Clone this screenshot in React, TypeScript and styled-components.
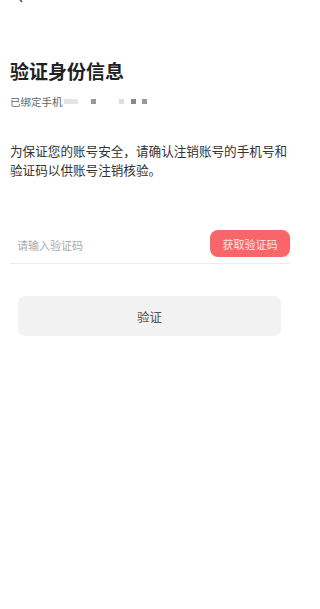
import React from "react";
import styled, { createGlobalStyle } from "styled-components";

const Global = createGlobalStyle`
  html, body { margin: 0; padding: 0; background: #fff; }
  body { font-family: "Noto Sans CJK SC", "Noto Sans", sans-serif; }
`;

const Page = styled.div`
  width: 294px;
  min-height: 609px;
  background: #fff;
  display: flex;
  flex-direction: column;
  overflow: hidden;
`;

const Header = styled.div`
  height: 4px;
  padding-left: 15px;
  display: flex;
  align-items: flex-end;
  overflow: hidden;
`;

const BackIcon = styled.svg`
  width: 10px;
  height: 14px;
  flex: none;
  margin-bottom: 1px;
`;

const Content = styled.div`
  padding: 54px 4px 0 10px;
  display: flex;
  flex-direction: column;
`;

const Title = styled.h1`
  margin: 0;
  font-size: 19px;
  line-height: 26px;
  font-weight: 700;
  color: #222;
`;

const PhoneRow = styled.div`
  margin-top: 9px;
  display: flex;
  align-items: center;
  height: 16px;
  font-size: 10.5px;
  color: #666;
`;

const Mask = styled.span<{ $w: number; $shade: string; $gap: number }>`
  display: inline-block;
  width: ${(p) => p.$w}px;
  height: 5px;
  margin-left: ${(p) => p.$gap}px;
  background: ${(p) => p.$shade};
`;

const Notice = styled.p`
  margin: 32px 0 0 0;
  font-size: 12.6px;
  line-height: 19px;
  color: #333;
`;

const InputRow = styled.div`
  margin-top: 48px;
  height: 36px;
  display: flex;
  align-items: center;
  justify-content: space-between;
  border-bottom: 1px solid #ececec;
  padding-left: 7px;
`;

const Input = styled.input`
  border: none;
  outline: none;
  background: transparent;
  font-family: inherit;
  font-size: 11px;
  color: #333;
  width: 150px;
  padding: 0;
  &::placeholder { color: #aaa; }
`;

const CodeButton = styled.button`
  height: 27px;
  width: 80px;
  border: none;
  border-radius: 8px;
  background: #f8666b;
  color: #fde8e8;
  font-family: inherit;
  font-size: 11px;
  padding: 0;
  margin-bottom: 3px;
`;

const VerifyButton = styled.button`
  margin: 32px 9px 0 8px;
  height: 40px;
  border: none;
  border-radius: 7px;
  background: #f2f2f2;
  color: #555;
  font-family: inherit;
  font-size: 12.5px;
  padding: 0;
`;

export default function App() {
  return (
    <>
      <Global />
      <Page>
        <Header>
          <BackIcon viewBox="0 0 10 14">
            <path d="M7 1 L2 7 L7 13" fill="none" stroke="#555" strokeWidth="1.6" />
          </BackIcon>
        </Header>
        <Content>
          <Title>验证身份信息</Title>
          <PhoneRow>
            已绑定手机
            <Mask $w={14} $shade="#e4e4e4" $gap={1} />
            <Mask $w={5} $shade="#999" $gap={13} />
            <Mask $w={5} $shade="#ddd" $gap={23} />
            <Mask $w={5} $shade="#888" $gap={7} />
            <Mask $w={5} $shade="#999" $gap={6} />
          </PhoneRow>
          <Notice>
            为保证您的账号安全，请确认注销账号的手机号和验证码以供账号注销核验。
          </Notice>
          <InputRow>
            <Input placeholder="请输入验证码" />
            <CodeButton>获取验证码</CodeButton>
          </InputRow>
          <VerifyButton>验证</VerifyButton>
        </Content>
      </Page>
    </>
  );
}
